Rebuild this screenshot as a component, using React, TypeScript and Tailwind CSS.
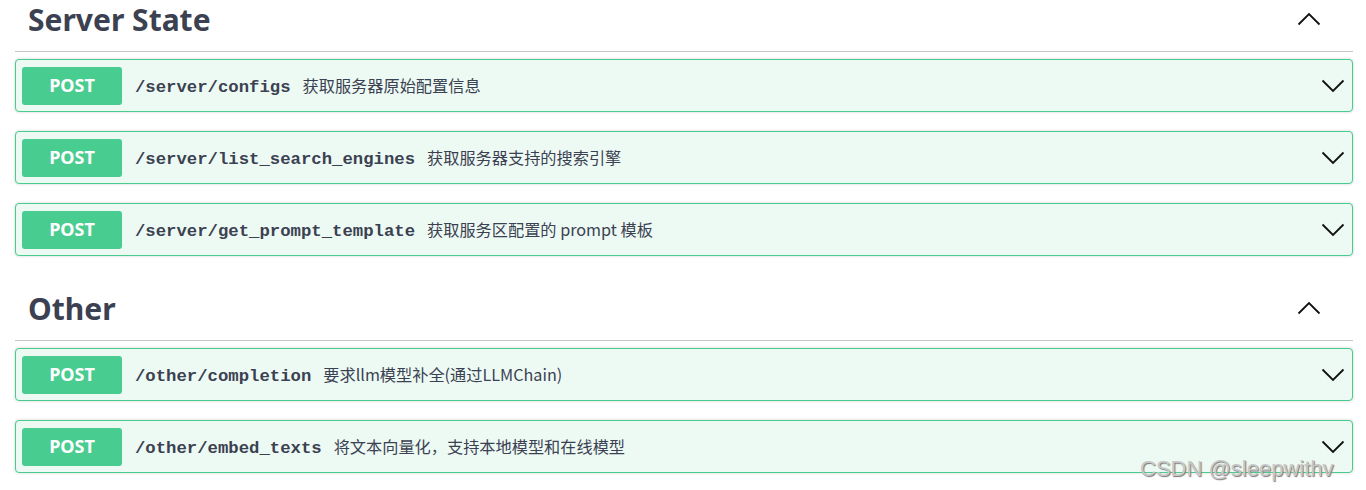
const sections = [
  {
    title: "Server State",
    ops: [
      { path: "/server/configs", desc: "获取服务器原始配置信息" },
      { path: "/server/list_search_engines", desc: "获取服务器支持的搜索引擎" },
      { path: "/server/get_prompt_template", desc: "获取服务区配置的 prompt 模板" },
    ],
  },
  {
    title: "Other",
    ops: [
      { path: "/other/completion", desc: "要求llm模型补全(通过LLMChain)" },
      { path: "/other/embed_texts", desc: "将文本向量化，支持本地模型和在线模型" },
    ],
  },
];

function Chevron({ up }: { up?: boolean }) {
  return (
    <svg width="24" height="14" viewBox="0 0 24 14" fill="none" stroke="#111" strokeWidth="1.8" className={up ? "rotate-180" : ""}>
      <polyline points="1.5,1.5 12,12 22.5,1.5" />
    </svg>
  );
}

function Operation({ path, desc }: { path: string; desc: string }) {
  return (
    <div className="h-[53px] flex items-center pl-[6px] pr-[7px] rounded-[4px] border border-[#49cc90] bg-[#edfaf4] shadow-[0_0_3px_rgba(0,0,0,0.19)]">
      <div className="w-[100px] h-[38px] rounded-[3px] bg-[#49cc90] flex items-center justify-center text-white font-bold text-[18px] font-['Noto_Sans',sans-serif]">
        POST
      </div>
      <div className="flex-1 flex items-baseline pt-[2px]">
        <span className="ml-[13px] text-[17.3px] font-semibold text-[#3b4151] font-['Liberation_Mono',monospace]">
          {path}
        </span>
        <span className="ml-[12px] text-[16.2px] text-[#3b4151] font-['Noto_Sans_CJK_SC',sans-serif]">
          {desc}
        </span>
      </div>
      <Chevron />
    </div>
  );
}

export default function App() {
  return (
    <div className="relative w-[1366px] h-[490px] overflow-hidden bg-white pl-[15px] pr-[13px] font-['Noto_Sans','Noto_Sans_CJK_SC',sans-serif]">
      {sections.map((s, i) => (
        <div key={s.title} className={i > 0 ? "mt-[33px]" : ""}>
          <div className="h-[52px] flex items-start justify-between border-b border-[rgba(59,65,81,0.3)] pl-[13px] pr-[32px]">
            <h3 className="text-[30px] leading-[40px] font-bold text-[#3b4151]">{s.title}</h3>
            <div className="mt-[12px]">
              <Chevron up />
            </div>
          </div>
          <div className="mt-[7px] flex flex-col gap-[19px]">
            {s.ops.map((op) => (
              <Operation key={op.path} path={op.path} desc={op.desc} />
            ))}
          </div>
        </div>
      ))}
      <div className="absolute left-[1140px] top-[452px] whitespace-nowrap text-[22px] text-[#c8c8c8] font-['Liberation_Sans',sans-serif] [text-shadow:1px_1px_1px_#777]">
        CSDN @sleepwithv
      </div>
    </div>
  );
}
